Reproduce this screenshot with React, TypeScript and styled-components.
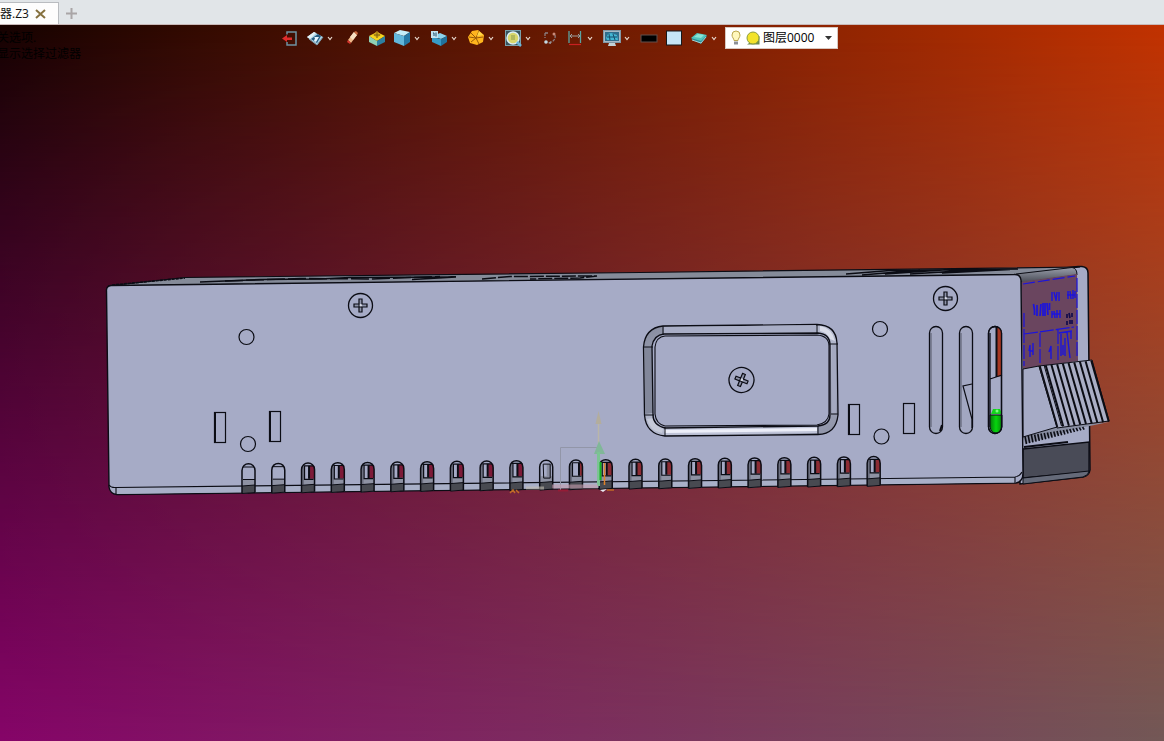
import React from "react";
import styled, { createGlobalStyle } from "styled-components";

const GlobalStyle = createGlobalStyle`
  * { box-sizing: border-box; }
  html, body, #root { height: 100%; }
  body {
    margin: 0;
    overflow: hidden;
    font-family: "Open Sans", "Noto Sans CJK SC", sans-serif;
    font-size: 12px;
    line-height: 16px;
    color: #111;
  }
  button { border: 0; padding: 0; background: none; font: inherit; cursor: pointer; }
`;

const Shell = styled.div`
  display: flex;
  flex-direction: column;
  height: 100%;
`;

const TabBar = styled.header`
  display: flex;
  align-items: flex-end;
  height: 25px;
  padding-top: 2px;
  background: #e1e5e8;
  border-bottom: 1px solid #c9b9b9;
`;

const Tab = styled.div`
  display: flex;
  align-items: center;
  gap: 6px;
  height: 22px;
  padding-right: 12px;
  background: #fdfdfd;
  border-top: 1px solid #b9bcc0;
  border-right: 1px solid #b9bcc0;
`;

const TabButton = styled.button`
  display: flex;
  align-items: center;
  justify-content: center;
`;

const NewTabButton = styled(TabButton)`
  width: 26px;
  height: 22px;
`;

const Viewport = styled.main`
  position: relative;
  flex: 1;
  min-height: 0;
  background: linear-gradient(to right, #160300, #c23200);
`;

/* Lower colour pair, faded in from top to bottom over the upper pair. */
const LowerTint = styled.div`
  position: absolute;
  inset: 0;
  background: linear-gradient(to right, #860468, #725856);
  mask-image: linear-gradient(to bottom, transparent, #000);
`;

const Scene = styled.svg`
  position: absolute;
  inset: 0;
  width: 100%;
  height: 100%;
`;

const Hints = styled.div`
  position: absolute;
  top: 5px;
  left: -3px;
  color: #000;
  white-space: nowrap;
`;

const Toolbar = styled.div`
  position: relative;
  display: flex;
  align-items: center;
  justify-content: center;
  gap: 3px;
  height: 26px;
  padding-right: 47px;
`;

const ToolGroup = styled.div`
  display: flex;
  align-items: center;
`;

const ToolButton = styled.button`
  display: flex;
  align-items: center;
  justify-content: center;
  width: 22px;
  height: 22px;
`;

const CaretButton = styled.button`
  display: flex;
  align-items: center;
  width: 12px;
  height: 22px;
`;

const LayerPicker = styled.label`
  display: flex;
  align-items: center;
  gap: 2px;
  width: 113px;
  height: 22px;
  padding: 0 5px 0 3px;
  background: #fff;
  border: 1px solid #d8c8c0;
`;

const LayerSelect = styled.select`
  appearance: none;
  flex: 1;
  min-width: 0;
  height: 20px;
  padding: 0;
  border: 0;
  background: transparent;
  font: inherit;
  color: #000;
`;

const icons = {
  exit: (
    <>
      <path d="M6 5.500V3h9v13H6v-3" fill="none" stroke="#6d93a3" strokeWidth="1.5" />
      <path d="M1 9.500l5-3.500v2.500h5v2.400H6V13z" fill="#e02c2c" />
    </>
  ),
  view: (
    <>
      <path d="M1 8l7-5 9 5-6 8z" fill="#a9d3e6" />
      <path d="M1 8l7-5 2 1-6 6z" fill="#e3f1f6" />
      <path d="M5 10l7-5 3 2-4 7z" fill="#235c82" />
      <path d="M8 8l5 0-3 5-2-1 1-3z" fill="#e7f6ff" />
      <path d="M3 10l8 6 6-8" fill="none" stroke="#7d99a8" />
    </>
  ),
  eraser: (
    <>
      <path d="M5 11l6-8 3 3-6 8z" fill="#f0b889" />
      <path d="M7 8l4-5 3 3-4 5z" fill="#f7e1c4" />
      <path d="M5 11l3 3-1 1-3-2z" fill="#d9362d" />
      <path d="M11 3l3 3 1-2-2-2z" fill="#c9683e" />
    </>
  ),
  section: (
    <>
      <path d="M1 7l8-4 8 4-8 5z" fill="#f5d51f" />
      <path d="M1 7l8 5v5l-8-4z" fill="#8fd0b4" />
      <path d="M17 7l-8 5v5l8-4z" fill="#2d7fa0" />
      <path d="M5 6l4-4 4 4-4 3z" fill="#d8a81c" />
      <path d="M9 3v6M6 6h6" stroke="#7b6410" />
    </>
  ),
  cube: (
    <>
      <path d="M1 4l6-3 10 2-6 4z" fill="#c5edf8" />
      <path d="M1 4l10 3v10L1 13z" fill="#62b7dc" />
      <path d="M11 7l6-4v10l-6 4z" fill="#2679a6" />
    </>
  ),
  boxes: (
    <>
      <path d="M3 7l7-3 7 3-6 3z" fill="#8bd3ee" />
      <path d="M2 8l9 2v7l-9-4z" fill="#379bc8" />
      <path d="M11 10l6-3v6l-6 4z" fill="#21729c" />
      <path d="M1 2h7v7H1z" fill="#c3e2f0" />
      <path d="M3 4h1v3M6 3.500v4" stroke="#21516f" fill="none" />
    </>
  ),
  pie: (
    <>
      <path d="M5 2l6-1 6 5-1 7-6 3-7-2-2-6z" fill="#ffb51e" />
      <path d="M9 9L4 4M9 9l3-7M9 9l7-1M9 9l3 6M9 9l-5 4M9 9L2 8" stroke="#9a5b08" />
      <path d="M10 7l2-5 4 4z" fill="#ffd84c" />
    </>
  ),
  zoom: (
    <>
      <rect x="1.500" y="1.500" width="15" height="15" fill="#38545e" stroke="#7aa0aa" />
      <circle cx="9" cy="9" r="6" fill="#d8d66c" stroke="#dceff4" strokeWidth="1.5" />
      <path d="M7 6h4v5H7z" fill="#b2b95c" />
      <path d="M13 13l4 4" stroke="#6ab6da" strokeWidth="2.500" />
    </>
  ),
  rotate: (
    <>
      <path d="M4 4h4M4 4v5M14 6c1 4-2 7-6 8" fill="none" stroke="#8a7d80" strokeWidth="1.3" strokeDasharray="3 1" />
      <circle cx="13" cy="5" r="1.500" fill="#c98a79" />
      <circle cx="5" cy="13" r="1.800" fill="#c3dbe5" />
      <path d="M10 12v3l-3-1z" fill="#9a9698" />
    </>
  ),
  dimension: (
    <>
      <path d="M3 2v12M14.500 2v12" stroke="#5aa2a1" strokeWidth="1.300" />
      <path d="M4 7h10M6 5L4 7l2 2M12 5l2 2-2 2" stroke="#9ba0a0" fill="none" />
      <path d="M3 15.500h12" stroke="#c92020" strokeWidth="1.200" />
    </>
  ),
  monitor: (
    <>
      <rect x="0.500" y="1.500" width="17" height="12" fill="#a7b9c6" stroke="#8197a5" />
      <path d="M2 3h14v9H2z" fill="#2f6d8c" />
      <path d="M3 9l2-4 3-1 3 1 3 1 1 5H4z" fill="#43b6d3" />
      <path d="M6 5l1 6M10 5l2 6M4 8h10" stroke="#174d6b" />
      <path d="M6 14h6l1 3H5z" fill="#c4d2d8" />
    </>
  ),
  line: <rect x="1" y="6" width="16" height="7" fill="#000" stroke="#63504c" />,
  fill: <rect x="1.500" y="2" width="15" height="14" fill="#c6e5f7" stroke="#16191c" />,
  layers: (
    <>
      <path d="M1 10l6-4 10 1-6 8z" fill="#2a8f99" />
      <path d="M1 9l6-5 10 2-6 6z" fill="#52c5bd" />
      <path d="M4 8l4-3 6 1-3 3z" fill="#8ae4d4" />
      <path d="M2 11l9 3 5-6" fill="none" stroke="#a6cfd1" />
    </>
  ),
};

type IconName = keyof typeof icons;

const tools: { icon: IconName; label: string; menu?: boolean }[] = [
  { icon: "exit", label: "退出" },
  { icon: "view", label: "视图", menu: true },
  { icon: "eraser", label: "擦除" },
  { icon: "section", label: "剖面" },
  { icon: "cube", label: "着色", menu: true },
  { icon: "boxes", label: "显示", menu: true },
  { icon: "pie", label: "分析", menu: true },
  { icon: "zoom", label: "缩放", menu: true },
  { icon: "rotate", label: "旋转" },
  { icon: "dimension", label: "标注", menu: true },
  { icon: "monitor", label: "屏幕", menu: true },
  { icon: "line", label: "线条颜色" },
  { icon: "fill", label: "填充颜色" },
  { icon: "layers", label: "图层", menu: true },
];

function Tool({ icon, label, menu }: { icon: IconName; label: string; menu?: boolean }) {
  return (
    <ToolGroup>
      <ToolButton aria-label={label}>
        <svg width="18" height="18" viewBox="0 0 18 18">{icons[icon]}</svg>
      </ToolButton>
      {menu && (
        <CaretButton aria-label={`${label}选项`}>
          <svg width="8" height="6" viewBox="0 0 8 6">
            <path d="M2 2l2 2.500L6 2" fill="none" stroke="#ead9cf" strokeWidth="1.200" />
          </svg>
        </CaretButton>
      )}
    </ToolGroup>
  );
}

const INK = "#0b0c14";
const FACE = "#a6abc6";

function Screw({ x, y, r, turn = 0 }: { x: number; y: number; r: number; turn?: number }) {
  return (
    <g transform={`translate(${x} ${y}) rotate(${turn})`}>
      <circle r={r} fill={FACE} stroke={INK} strokeWidth="1.3" />
      <path
        d="M-1.500-6.500h3v5h5v3h-5v5h-3v-5h-5v-3h5z"
        fill="#8d92a8"
        stroke={INK}
        strokeWidth="1.2"
      />
      <circle r="1.5" fill="#d7dae6" />
      <path d="M-1.500-1.500v3h3" stroke={INK} fill="none" />
    </g>
  );
}

function Vent({ index }: { index: number }) {
  const x = 242 + index * 29.77;
  const y = 463.5 - index * 0.34;
  const open = index > 1 && index !== 10;
  const redStart = index === 11 ? 10 : 8;
  return (
    <g transform={`translate(${x} ${y})`}>
      <path d="M0 30V7C0-2 13-2 13 7V29z" fill={FACE} />
      <path d="M1 16h12v6H1z" fill="#8e92a3" />
      {open && (
        <>
          <path d={`M${redStart} 3h${13 - redStart}v13H${redStart}z`} fill={index > 9 ? "#8c2c34" : "#7d1a38"} />
          <path d="M1.500 4v18" stroke="#6d7080" strokeWidth="2" />
          <path d="M2 3h10M3 3v13.500h9" stroke={INK} strokeWidth="1.2" fill="none" />
          <path d={`M${redStart - 0.5} 3v13`} stroke={INK} strokeWidth="2" />
        </>
      )}
      {index === 10 && (
        <>
          <path d="M7 4h4v14H7z" fill="#888c9e" />
          <path d="M3.500 4h7v14H4z" fill="none" stroke={INK} />
        </>
      )}
      {index < 2 && <path d="M1 3.500h11M1 16h12" stroke={INK} />}
      <path d="M0 22.500l13-1V29L0 30z" fill="#484a51" />
      <path d="M0 30V7C0-2 13-2 13 7V29" fill="none" stroke={INK} strokeWidth="1.5" />
      <path d="M0 22.500l13-1M0 30l13-1" stroke={INK} strokeWidth="1" />
    </g>
  );
}

function Connector() {
  const ribs = Array.from({ length: 10 }, (_, i) => i);
  const teeth = Array.from({ length: 19 }, (_, i) => i);
  return (
    <g>
      <path d="M1023 437l34-10 52-5-29 6-55 16z" fill="#888da1" />
      {teeth.map((i) => (
        <path
          key={i}
          d={`M${1025 + i * 3.2} ${436 - i * 0.5}l1.500 ${8 - i * 0.3}`}
          stroke={INK}
          strokeWidth="1.6"
        />
      ))}
      <path d="M1023 369l16-3 18 61-34 10z" fill={FACE} stroke={INK} />
      <path d="M1039 366l53-6 17 61-52 7z" fill="#aaaec5" stroke={INK} />
      {ribs.map((i) => (
        <path
          key={i}
          d={`M${1040 + i * 5.700} ${366 - i * 0.600}l17.500 61`}
          stroke={INK}
          strokeWidth={i > 0 ? 2 : 1.5}
        />
      ))}
      <path d="M1044 365l17.500 61" stroke={INK} strokeWidth="1" />
    </g>
  );
}

function RatingLabel() {
  return (
    <g>
      <path d="M1021 282l56-8 1 87-55 8z" fill="#6a455f" />
      <g stroke="#1c14dc" fill="none" strokeWidth="1.2">
        <path d="M1023 284l52-8" strokeDasharray="12 3" />
        <path d="M1024 334l50-7M1040 333v31M1058 330v30M1024 313v53M1077 278v80" strokeDasharray="14 2" />
        <path d="M1033.500 304l1 6v5M1037 305v11M1041 304l-1 12M1043 303v13M1045 303v13M1047 303l1 12M1049.500 303v7" strokeWidth="1.700" />
        <path d="M1052 292v9M1054 292l2 8M1057 292l-1 9M1059 292v9M1068 291v8M1070 291l1 8M1073 290v9M1075 291v7" strokeWidth="1.400" />
        <path d="M1052 311v7M1054 311l1 7M1057 310v8M1060 310v8M1052 314h8M1067 295h8" strokeWidth="1.500" />
        <path d="M1029 351l1-6v12M1033 343v12M1030 351h3M1049 352l2-6v13M1061 334v22M1063 345v10M1065 338v18M1067 332l3 26M1071 331v8M1059 333l13-2" strokeWidth="1.400" />
      </g>
      <path d="M1067 314v4M1069 313l1 5M1072 313v4M1067 321v4M1070 320v4M1072 320v4" stroke="#120c4c" fill="none" strokeWidth="1.700" />
    </g>
  );
}

function CoverPlate() {
  return (
    <g>
      <path
        d="M663 326L817 324.500Q836 325 837 343L838 415Q836 434 818 434.500L665 436Q646 434 644.500 415L643.500 347Q645 328 663 326z"
        fill="url(#rim)"
        stroke={INK}
        strokeWidth="1.3"
      />
      <path d="M645 347v67l8-1v-65z" fill="#82879a" />
      <path d="M664 428l153-2v7l-152 2z" fill="#bfc4d8" />
      <path d="M664 430l153-2v3l-152 2z" fill="#eceef8" />
      <path d="M664 327l152-2v7l-152 2z" fill="#a9aec6" />
      <path d="M832 345l4-1v69l-4 1z" fill="#a4a9c0" />
      <path d="M820 326q12 2 15 15l-5-2q-3-7-10-8z" fill="#d9dce8" />
      <path d="M647 419q3 12 15 14l1-4q-8-2-10-11z" fill="#c6cad9" />
      <path
        d="M664 334L818 333Q830 334 830 345V415Q830 425 818 426L665 428Q653 425 653 415L652 346Q654 335 664 334z"
        fill={FACE}
        stroke={INK}
        strokeWidth="1.3"
      />
      <path
        d="M665 336L817 335Q829 336 829 346V414Q828 423 817 425L665 426Q656 424 655 414V347Q656 337 665 336z"
        fill={FACE}
        stroke={INK}
        strokeWidth="1.1"
      />
      <path d="M663 326v9M817 324v10M643 347h10M829 344h9M831 414h7M644 415h10M665 427v9M818 426v9" stroke={INK} />
    </g>
  );
}

function Slots() {
  return (
    <g stroke={INK} strokeWidth="1.3">
      <rect x="929.500" y="326.500" width="13" height="107" rx="6.500" fill="#a2a7c1" />
      <path d="M942 425l-2 6" strokeWidth="2" />
      <path d="M931 333v94" strokeWidth="1" stroke="#555969" />
      <rect x="959.500" y="326.500" width="13" height="107" rx="6.500" fill="#a2a7c1" />
      <path d="M972 384l-9 2 9 33v9" fill="none" strokeWidth="1.200" />
      <path d="M961 333v94" strokeWidth="1" stroke="#555969" />
      <rect x="988.500" y="326.500" width="13" height="107" rx="6.500" fill={FACE} />
      <path d="M996 327q6 1 6 7v42l-6 1z" fill="#a63722" stroke="none" />
      <path d="M996.500 327v50" strokeWidth="2" />
      <path d="M990 379l12-4M990 333v94" fill="none" />
      <path d="M991 414l2-5h7l2 5z" fill="#12d41c" stroke="none" />
      <path d="M990 415h12v12q-1 6-6 6t-6-6z" fill="url(#led)" strokeWidth="1" />
      <circle cx="997" cy="411" r="1.500" fill="#7dff7e" stroke="none" />
      <rect x="988.500" y="326.500" width="13" height="107" rx="6.500" fill="none" />
    </g>
  );
}

function Model() {
  return (
    <Scene viewBox="0 25 1164 716" role="img" aria-label="三维模型">
      <defs>
        <linearGradient id="rim" x1="0" y1="0" x2="1" y2="1">
          <stop offset="0" stopColor="#858a9d" />
          <stop offset="0.500" stopColor="#b6bbd0" />
          <stop offset="1" stopColor="#8d92a6" />
        </linearGradient>
        <linearGradient id="led">
          <stop offset="0" stopColor="#067a0b" />
          <stop offset="0.500" stopColor="#06d60d" />
          <stop offset="1" stopColor="#068a0a" />
        </linearGradient>
        <linearGradient id="fold" x1="0" y1="0" x2="0" y2="1">
          <stop offset="0" stopColor="#9a9eab" />
          <stop offset="1" stopColor="#454852" />
        </linearGradient>
      </defs>

      <path d="M1010 274L1078 266.500H1082Q1088 267 1088 273L1090 470Q1089 476 1083 477L1020 484z" fill={FACE} stroke={INK} strokeWidth="1.5" />
      <path d="M108 286L185 277.500L640 272.500L1080 267L1018 275z" fill="#858b99" stroke={INK} strokeWidth="1.2" />
      <path d="M112 285L185 278" stroke={INK} strokeWidth="1.600" strokeDasharray="3 1" />
      <g fill="none" stroke={INK}>
        <path d="M200 282L260 279.500L320 279L350 277.500L456 277L412 279.500" strokeWidth="1.500" />
        <path d="M225 281L300 278.500L370 279L440 276.500" strokeWidth="1.500" strokeDasharray="18 3" />
        <path d="M482 279L510 276.500L597 276L580 278L530 279" strokeWidth="1.500" strokeDasharray="14 2" />
        <path d="M846 274L890 270.500L1018 269M862 275L920 270M885 274L950 269.500M910 274L982 269.500M942 273L1010 269.500" strokeWidth="1.700" />
      </g>
      <path d="M1016 274L1072 267.500Q1077 268 1077 275L1022 283z" fill="url(#fold)" stroke={INK} />
      <RatingLabel />
      <path d="M1023 449l66-7v30l-66 6z" fill="#494b57" stroke={INK} strokeWidth="1.3" />
      <path d="M1023 478l66-7q0 4-6 6l-60 7z" fill="#656a79" stroke={INK} />
      <path d="M1024 447l44-5" stroke={INK} strokeWidth="2" />
      <Connector />

      <path
        d="M111 285.500L1014 274.500Q1020 274 1021 280L1023 473Q1023 482 1016 483L117 494.500Q110 494 109 487L106.500 291Q106 286 111 285.500z"
        fill={FACE}
        stroke={INK}
        strokeWidth="1.4"
      />
      <path d="M110 488L1015 477L1016 482.500L117 494z" fill="#a9b0c8" />
      <path d="M109 485Q111 488 116 487.500L1015 477Q1020 476 1022 472M116 488v6M1015 477v6" fill="none" stroke={INK} strokeWidth="1.100" />

      {Array.from({ length: 22 }, (_, i) => (
        <Vent key={i} index={i} />
      ))}

      <g fill={FACE} stroke={INK} strokeWidth="1.2">
        <circle cx="246.500" cy="337" r="7.500" />
        <circle cx="248" cy="444" r="7.500" />
        <circle cx="880" cy="329" r="7.500" />
        <circle cx="881.500" cy="436.500" r="7.500" />
        <rect x="214.500" y="412.500" width="11" height="30" />
        <rect x="269.500" y="411.500" width="11" height="30" />
        <rect x="848.500" y="404.500" width="11" height="30" />
        <rect x="903.500" y="403.500" width="11" height="30" />
        <path d="M215.500 413v29M270.500 412v29M849.500 405v29" strokeWidth="1" />
      </g>
      <CoverPlate />
      <Screw x={360.5} y={305.5} r={12} />
      <Screw x={945.5} y={298.5} r={12} />
      <Screw x={741.5} y={380} r={12.5} turn={22} />
      <Slots />

      <g fill="none">
        <path d="M560.500 490v-42.500h38" stroke="#9296a8" />
        <path d="M598.500 424v20" stroke="#b9b6a8" strokeWidth="1.500" />
        <path d="M595.500 424l3-13 3 13z" fill="#b3ad9d" />
        <path d="M594 454l5-13 6 13z" fill="#80b798" />
        <path d="M598.500 452v34" stroke="#7bc493" strokeWidth="3" />
        <path d="M600.500 462v18" stroke="#14b520" strokeWidth="2" />
        <path d="M604.500 463v22" stroke="#e08228" strokeWidth="1.500" />
        <path d="M552 486.500h46" stroke="#c69dad" strokeWidth="4" opacity="0.600" />
        <path d="M526 488h18" stroke="#c5bfb2" strokeWidth="3" opacity="0.600" />
        <path d="M558 490.500h10" stroke="#951c36" strokeWidth="2" />
        <path d="M510 493l3-3 2 3M516 490l3 3M607 490h7" stroke="#c06a26" strokeWidth="1.500" />
        <path d="M600 490l7-1-4 3z" fill="#e9e9f2" />
      </g>
    </Scene>
  );
}

export default function App() {
  return (
    <Shell>
      <GlobalStyle />
      <TabBar>
        <Tab>
          <span>器.Z3</span>
          <TabButton aria-label="关闭">
            <svg width="11" height="10" viewBox="0 0 11 10">
              <path d="M1 1l9 8M10 1L1 9" stroke="#85713f" strokeWidth="2" />
            </svg>
          </TabButton>
        </Tab>
        <NewTabButton aria-label="新建">
          <svg width="11" height="11" viewBox="0 0 11 11">
            <path d="M5.500 0v11M0 5.500h11" stroke="#a9a5a6" strokeWidth="2" />
          </svg>
        </NewTabButton>
      </TabBar>
      <Viewport>
        <LowerTint />
        <Model />
        <Hints>
          <div>关选项.</div>
          <div>显示选择过滤器</div>
        </Hints>
        <Toolbar>
          {tools.map((tool) => (
            <Tool key={tool.icon} {...tool} />
          ))}
          <LayerPicker>
            <svg width="14" height="18" viewBox="0 0 14 18">
              <path d="M5 11.500c0-2-2-3-2-5.500a4 4 0 018 0c0 2.500-2 3.500-2 5.500z" fill="#fff7bd" stroke="#bba74e" />
              <path d="M5 12.500h4v3H5z" fill="#8c9096" />
            </svg>
            <svg width="16" height="16" viewBox="0 0 16 16">
              <path d="M2 14.500h12.500V6z" fill="#6b8a4e" />
              <circle cx="8" cy="8" r="6" fill="#f3e32b" stroke="#8c9c3e" />
            </svg>
            <LayerSelect aria-label="图层" defaultValue="0">
              <option value="0">图层0000</option>
            </LayerSelect>
            <svg width="7" height="4" viewBox="0 0 7 4">
              <path d="M0 0h7L3.500 4z" fill="#333" />
            </svg>
          </LayerPicker>
        </Toolbar>
      </Viewport>
    </Shell>
  );
}
